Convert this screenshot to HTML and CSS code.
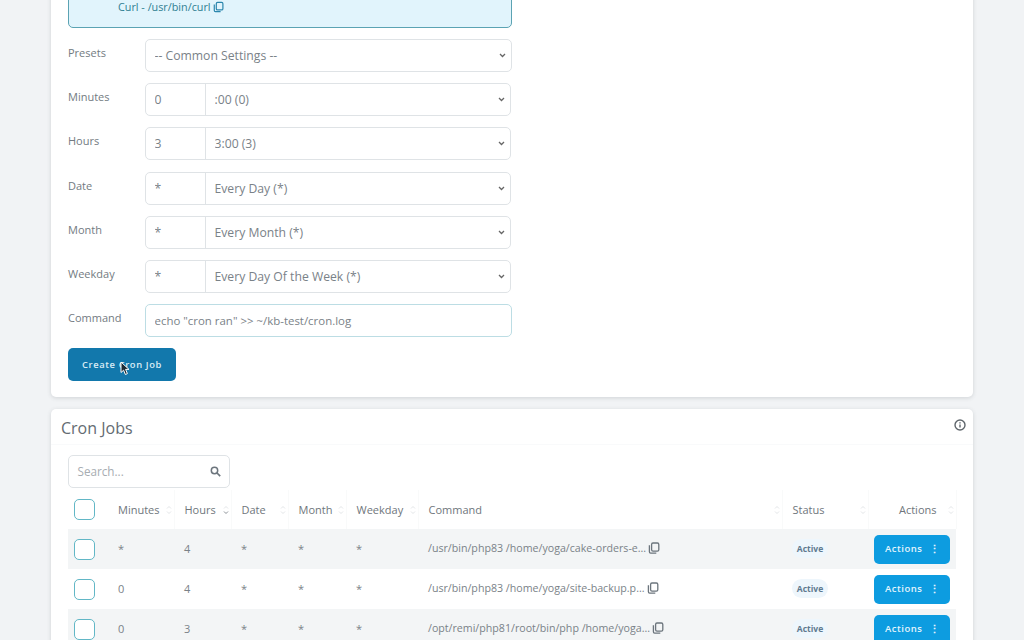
FILE: index.html
```html
<!DOCTYPE html>
<html lang="en">
<head>
    <meta charset="UTF-8">
    <meta name="viewport" content="width=device-width, initial-scale=1.0">
    <title>Cron Jobs</title>
    <link rel="stylesheet" href="styles.css">
</head>
<body>
    <svg class="sprites" width="0" height="0">
        <symbol id="copy" viewBox="0 0 12 12">
            <rect x="3.6" y="1" width="7.2" height="8.2" rx="1.4" fill="none" stroke="currentColor" stroke-width="1.3"/>
            <path d="M1.4 3.2v6.6c0 .8.5 1.3 1.3 1.3h5.6" fill="none" stroke="currentColor" stroke-width="1.3"/>
        </symbol>
        <symbol id="sort" viewBox="0 0 6 12">
            <path d="M1 4.5 3 2.5 5 4.5M1 7.5 3 9.5 5 7.5" fill="none" stroke="currentColor" stroke-width="1"/>
        </symbol>
        <symbol id="sort-down" viewBox="0 0 6 12">
            <path d="M1 4.5 3 2.5 5 4.5" fill="none" stroke="#e3e6e8" stroke-width="1"/>
            <path d="M1 7.5 3 9.5 5 7.5" fill="none" stroke="currentColor" stroke-width="1"/>
        </symbol>
    </svg>

    <main class="page">
        <section class="card form-card">
            <div class="notice">
                <p>Curl - /usr/bin/curl <svg class="icon-copy"><use href="#copy"/></svg></p>
            </div>

            <div class="field">
                <label>Presets</label>
                <select class="control"><option>-- Common Settings --</option></select>
            </div>
            <div class="field">
                <label>Minutes</label>
                <div class="pair">
                    <input type="text" value="0">
                    <select><option>:00 (0)</option></select>
                </div>
            </div>
            <div class="field">
                <label>Hours</label>
                <div class="pair">
                    <input type="text" value="3">
                    <select><option>3:00 (3)</option></select>
                </div>
            </div>
            <div class="field">
                <label>Date</label>
                <div class="pair">
                    <input type="text" value="*">
                    <select><option>Every Day (*)</option></select>
                </div>
            </div>
            <div class="field">
                <label>Month</label>
                <div class="pair">
                    <input type="text" value="*">
                    <select><option>Every Month (*)</option></select>
                </div>
            </div>
            <div class="field">
                <label>Weekday</label>
                <div class="pair">
                    <input type="text" value="*">
                    <select><option>Every Day Of the Week (*)</option></select>
                </div>
            </div>
            <div class="field">
                <label>Command</label>
                <input class="control command" type="text" value='echo "cron ran" &gt;&gt; ~/kb-test/cron.log'>
            </div>

            <button type="button" class="btn-create">Create Cron Job
                <svg class="cursor" width="11" height="15" viewBox="0 0 11 15">
                    <path d="M1 1v10.5l2.6-2.3 1.8 4.3 2-.9-1.8-4.2h3.4z" fill="#1d2a33" stroke="#fff" stroke-width="1"/>
                </svg>
            </button>
        </section>

        <section class="card list-card">
            <header class="list-head">
                <h2>Cron Jobs</h2>
                <svg class="icon-info" width="12" height="12" viewBox="0 0 12 12">
                    <circle cx="6" cy="6" r="5" fill="none" stroke="currentColor" stroke-width="1.4"/>
                    <path d="M6 5.4v3.2M6 3.2v1.2" stroke="currentColor" stroke-width="1.4"/>
                </svg>
            </header>

            <div class="list-body">
                <div class="search">
                    <span>Search...</span>
                    <svg width="11" height="11" viewBox="0 0 11 11">
                        <circle cx="4.5" cy="4.5" r="3.2" fill="none" stroke="currentColor" stroke-width="1.5"/>
                        <path d="M7 7l3.2 3.2" stroke="currentColor" stroke-width="1.7"/>
                    </svg>
                </div>

                <table class="jobs">
                    <colgroup>
                        <col class="c-check"><col class="c-min"><col class="c-hour"><col class="c-date">
                        <col class="c-month"><col class="c-week"><col class="c-cmd"><col class="c-status"><col class="c-act">
                    </colgroup>
                    <thead>
                        <tr>
                            <th><span class="check"></span></th>
                            <th><div class="th-in">Minutes<svg class="sort"><use href="#sort"/></svg></div></th>
                            <th><div class="th-in">Hours<svg class="sort active"><use href="#sort-down"/></svg></div></th>
                            <th><div class="th-in">Date<svg class="sort"><use href="#sort"/></svg></div></th>
                            <th><div class="th-in">Month<svg class="sort"><use href="#sort"/></svg></div></th>
                            <th><div class="th-in">Weekday<svg class="sort"><use href="#sort"/></svg></div></th>
                            <th><div class="th-in">Command<svg class="sort"><use href="#sort"/></svg></div></th>
                            <th><div class="th-in">Status<svg class="sort"><use href="#sort"/></svg></div></th>
                            <th><div class="th-in th-right">Actions<svg class="sort"><use href="#sort"/></svg></div></th>
                        </tr>
                    </thead>
                    <tbody>
                        <tr>
                            <td><span class="check"></span></td>
                            <td>*</td><td>4</td><td>*</td><td>*</td><td>*</td>
                            <td class="cmd">/usr/bin/php83 /home/yoga/cake-orders-e...<svg class="icon-copy grey"><use href="#copy"/></svg></td>
                            <td><span class="badge">Active</span></td>
                            <td><button type="button" class="btn-actions">Actions <b>⋮</b></button></td>
                        </tr>
                        <tr>
                            <td><span class="check"></span></td>
                            <td>0</td><td>4</td><td>*</td><td>*</td><td>*</td>
                            <td class="cmd">/usr/bin/php83 /home/yoga/site-backup.p...<svg class="icon-copy grey"><use href="#copy"/></svg></td>
                            <td><span class="badge">Active</span></td>
                            <td><button type="button" class="btn-actions">Actions <b>⋮</b></button></td>
                        </tr>
                        <tr>
                            <td><span class="check"></span></td>
                            <td>0</td><td>3</td><td>*</td><td>*</td><td>*</td>
                            <td class="cmd">/opt/remi/php81/root/bin/php /home/yoga...<svg class="icon-copy grey"><use href="#copy"/></svg></td>
                            <td><span class="badge">Active</span></td>
                            <td><button type="button" class="btn-actions">Actions <b>⋮</b></button></td>
                        </tr>
                    </tbody>
                </table>
            </div>
        </section>
    </main>
</body>
</html>
```

FILE: styles.css
```css
*{
    margin: 0px;
    padding: 0px;
    box-sizing: border-box;
}

html, body{
    height: 100%;
    overflow: hidden;
}

body{
    background: #f1f3f5;
    font-family: "Open Sans", "Liberation Sans", sans-serif;
    color: #6c757d;
    font-size: 12px;
}

.sprites{
    display: block;
}

/* page is scrolled: the top of the first card is above the window */
.page{
    width: 922px;
    margin: -30px 0 0 51px;
}

.card{
    background: #fff;
    border-radius: 5px;
    box-shadow: 0 1px 4px rgba(60,70,80,0.18);
}

.form-card{
    padding: 0 17px 16px;
    margin-bottom: 12px;
}

.notice{
    width: 444px;
    height: 58px;
    margin-bottom: 11px;
    padding: 28px 0 0 49px;
    background: #e1f4fc;
    border: 1px solid #5ba3b3;
    border-radius: 5px;
    color: #2f7f92;
    font-size: 10.8px;
    line-height: 16px;
}

.icon-copy{
    width: 11px;
    height: 12px;
    vertical-align: -2px;
    color: #2a86ad;
}

.icon-copy.grey{
    color: #6c757d;
    width: 12px;
    height: 12px;
    margin-left: 2px;
}

.field{
    display: flex;
    width: 444px;
    height: 33px;
    margin-bottom: 11.2px;
}

.field label{
    width: 77px;
    flex: none;
    padding-top: 6px;
    font-size: 11px;
    line-height: 16px;
    color: #737b82;
}

.control, .pair{
    flex: 1;
    height: 33px;
    border: 1px solid #dfe3e6;
    border-radius: 5px;
    background-color: #fff;
}

.pair{
    display: flex;
    margin-right: 1px;
}

select, input{
    font-family: inherit;
    font-size: 12.2px;
    color: #7a8288;
    outline: none;
}

select{
    -webkit-appearance: none;
    appearance: none;
    padding-left: 8.5px;
    background-image: url("data:image/svg+xml,%3Csvg xmlns='http://www.w3.org/2000/svg' width='7' height='5' viewBox='0 0 7 5'%3E%3Cpath d='M1 1l2.5 2.5L6 1' fill='none' stroke='%23666' stroke-width='1.3'/%3E%3C/svg%3E");
    background-repeat: no-repeat;
    background-position: right 5px center;
}

input{
    padding-left: 8.5px;
}

.pair input{
    width: 60px;
    flex: none;
    border: 0;
    border-right: 1px solid #dfe3e6;
    background: none;
}

.pair select{
    flex: 1;
    border: 0;
    background-color: transparent;
}

.command{
    border-color: #bcdde4;
    font-size: 11.45px;
}

.btn-create{
    display: block;
    position: relative;
    width: 108px;
    height: 33px;
    border: 0;
    border-radius: 5px;
    background: #1278ac;
    color: #d9ecf5;
    font-family: inherit;
    font-size: 9.4px;
    font-weight: 600;
    letter-spacing: 0.6px;
}

/* mouse pointer caught in the screenshot */
.cursor{
    position: absolute;
    left: 52px;
    top: 13px;
}

.list-card{
    height: 300px;
}

.list-head{
    display: flex;
    justify-content: space-between;
    height: 36px;
    padding: 8px 7px 0 10px;
    border-bottom: 1px solid #f9fafb;
}

.list-head h2{
    font-size: 16px;
    font-weight: 500;
    line-height: 22px;
    color: #646b72;
}

.icon-info{
    margin-top: 2px;
    color: #5f666c;
}

.list-body{
    padding: 10px 17px 0;
}

.search{
    display: flex;
    align-items: center;
    justify-content: space-between;
    width: 162px;
    height: 33px;
    padding: 0 8px 1px 8.5px;
    border: 1px solid #dfe3e6;
    border-radius: 5px;
    color: #a7adb2;
    font-size: 11.7px;
}

.search svg{
    color: #6c757d;
}

.jobs{
    width: 888px;
    margin-top: 2px;
    table-layout: fixed;
    border-collapse: collapse;
}

.c-check{ width: 40px; }
.c-min{ width: 66px; }
.c-hour{ width: 57px; }
.c-date{ width: 57px; }
.c-month{ width: 58px; }
.c-week{ width: 72px; }
.c-cmd{ width: 364px; }
.c-status{ width: 86px; }
.c-act{ width: 88px; }

.jobs th{
    height: 39px;
    text-align: left;
    font-size: 11px;
    font-weight: 500;
    color: #6f767c;
    border-right: 1px solid #f9fafa;
}

.jobs th:first-child{
    border-right: 0;
}

.th-in{
    display: flex;
    align-items: center;
    justify-content: space-between;
    padding: 0 2px 0 10px;
}

.th-right{
    justify-content: flex-end;
    gap: 11px;
}

.sort{
    width: 6px;
    height: 12px;
    color: #e3e6e8;
}

.sort.active{
    color: #8a9096;
}

.jobs td{
    height: 40px;
    padding-left: 10px;
    padding-bottom: 2px;
    font-size: 11px;
    color: #7a8288;
    white-space: nowrap;
}

.jobs td.cmd{
    font-size: 10.65px;
}

.jobs tbody tr:nth-child(odd){
    background: #f3f5f6;
}

.jobs th:first-child, .jobs td:first-child{
    padding-left: 6px;
}

.jobs td:first-child, .jobs td:last-child{
    padding-bottom: 0;
}

.check{
    display: block;
    width: 21px;
    height: 21px;
    background: #fff;
    border: 1.5px solid #62b7c6;
    border-radius: 5px;
}

.badge{
    display: inline-block;
    width: 36px;
    height: 19px;
    border-radius: 10px;
    background: #eef6fc;
    color: #5f7a90;
    font-size: 8.5px;
    font-weight: 700;
    line-height: 19px;
    text-align: center;
}

.jobs td:last-child{
    padding-left: 6px;
}

.btn-actions{
    display: flex;
    align-items: center;
    justify-content: space-between;
    width: 76px;
    height: 29px;
    padding: 0 10px 1px 11px;
    border: 0;
    border-radius: 5px;
    background: #0d9ce0;
    color: #e4f4fc;
    font-family: inherit;
    font-size: 9.5px;
    font-weight: 600;
    letter-spacing: 0.5px;
}

.btn-actions b{
    font-size: 11px;
}
```
